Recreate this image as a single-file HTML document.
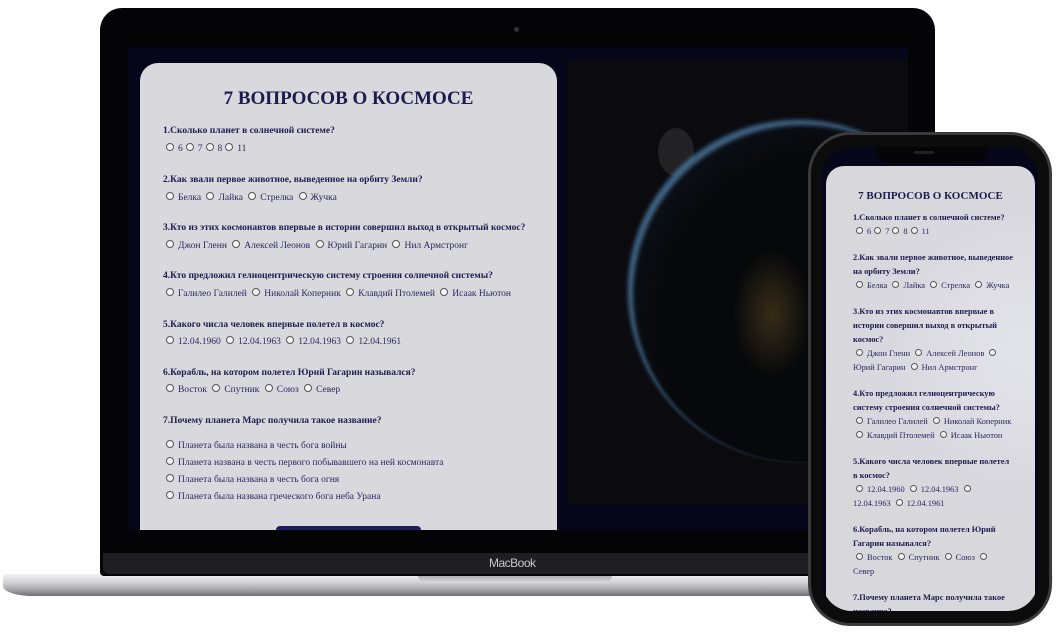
<!DOCTYPE html><html><head><meta charset="utf-8"><style>
*{margin:0;padding:0;box-sizing:border-box}
body{width:1056px;height:634px;background:#fff;position:relative;overflow:hidden;font-family:"Liberation Serif","DejaVu Serif",serif;color:#1d1b4e}
.a{position:absolute}
.q{position:absolute;font-weight:bold;font-size:9.5px;white-space:nowrap}
.o{position:absolute;font-size:9.5px;white-space:nowrap;color:#2a2860}
.r{display:inline-block;width:8px;height:8px;border:1px solid #555;border-radius:50%;background:#f4f4f6;margin:0 4px 0 3px;vertical-align:-0px}
.ph{position:absolute;width:180px;white-space:nowrap}
.pq{font-weight:bold;font-size:8.4px;line-height:14px}
.po{font-size:8.4px;line-height:14px;color:#2a2860;margin-bottom:12px}
.pr{display:inline-block;width:7px;height:7px;border:1px solid #555;border-radius:50%;background:#f4f4f6;margin:0 4px 0 3px}
</style></head><body>
<!-- laptop base -->
<div class="a" style="left:3px;top:574px;width:1050px;height:22px;background:linear-gradient(#f2f2f4 0,#d6d6da 35%,#a6a6ab 70%,#6e6e73 100%);border-radius:2px 2px 60px 30px/2px 2px 18px 10px"></div>
<div class="a" style="left:418px;top:575px;width:194px;height:8px;background:linear-gradient(#a9a9ae,#dcdce0);border-radius:0 0 8px 8px"></div>
<!-- laptop lid -->
<div class="a" style="left:100px;top:8px;width:835px;height:568px;background:#040306;border-radius:22px 22px 4px 4px"></div>
<div class="a" style="left:514px;top:27px;width:5px;height:5px;border-radius:50%;background:#333"></div>
<div class="a" style="left:103px;top:553px;width:830px;height:21px;background:#1f1f23;border-radius:0 0 6px 6px"></div>
<div class="a" style="left:489px;top:556px;font-family:'Liberation Sans',sans-serif;font-size:12px;color:#c8c8cc;letter-spacing:-0.5px">MacBook</div>
<div class="a" style="left:128px;top:47px;width:780px;height:483px;background:#06051a"></div>
<!-- space image -->
<div class="a" style="left:567px;top:59px;width:341px;height:446px;background:#0b0b0f;overflow:hidden">
<div class="a" style="left:91px;top:69px;width:36px;height:48px;border-radius:50%;background:#222225"></div>
<div class="a" style="left:63px;top:63px;width:340px;height:340px;border-radius:50%;background:radial-gradient(circle at 60% 60%,#07080b 60%,#0d1420 85%,#1d3550 96%);box-shadow:-2px -2px 4px rgba(100,170,230,.6),inset 3px 3px 4px rgba(110,170,220,.55)"></div>
<div class="a" style="left:165px;top:190px;width:80px;height:130px;background:radial-gradient(ellipse,rgba(200,150,60,.25),transparent 70%)"></div>
</div>
<!-- quiz card -->
<div class="a" style="left:140px;top:63px;width:417px;height:467px;background:#d9d8dd;border-radius:18px 18px 0 0"></div>
<div class="a" style="left:140px;top:88px;width:417px;text-align:center;font-weight:bold;font-size:19px">7 ВОПРОСОВ О КОСМОСЕ</div>
<div class="q" style="left:163px;top:126px">1.Сколько планет в солнечной системе?</div>
<div class="o" style="left:163px;top:143px"><span class="r"></span>6<span class="r"></span>7<span class="r"></span>8<span class="r"></span>11</div>
<div class="q" style="left:163px;top:175px">2.Как звали первое животное, выведенное на орбиту Земли?</div>
<div class="o" style="left:163px;top:192px"><span class="r"></span>Белка <span class="r"></span>Лайка <span class="r"></span>Стрелка <span class="r"></span>Жучка</div>
<div class="q" style="left:163px;top:223px">3.Кто из этих космонавтов впервые в истории совершил выход в открытый космос?</div>
<div class="o" style="left:163px;top:240px"><span class="r"></span>Джон Гленн <span class="r"></span>Алексей Леонов <span class="r"></span>Юрий Гагарин <span class="r"></span>Нил Армстронг</div>
<div class="q" style="left:163px;top:271px">4.Кто предложил гелиоцентрическую систему строения солнечной системы?</div>
<div class="o" style="left:163px;top:288px"><span class="r"></span>Галилео Галилей <span class="r"></span>Николай Коперник <span class="r"></span>Клавдий Птолемей <span class="r"></span>Исаак Ньютон</div>
<div class="q" style="left:163px;top:320px">5.Какого числа человек впервые полетел в космос?</div>
<div class="o" style="left:163px;top:336px"><span class="r"></span>12.04.1960 <span class="r"></span>12.04.1963 <span class="r"></span>12.04.1963 <span class="r"></span>12.04.1961</div>
<div class="q" style="left:163px;top:368px">6.Корабль, на котором полетел Юрий Гагарин назывался?</div>
<div class="o" style="left:163px;top:384px"><span class="r"></span>Восток <span class="r"></span>Спутник <span class="r"></span>Союз <span class="r"></span>Север</div>
<div class="q" style="left:163px;top:416px">7.Почему планета Марс получила такое название?</div>
<div class="o" style="left:163px;top:440px"><span class="r"></span>Планета была названа в честь бога войны</div>
<div class="o" style="left:163px;top:457px"><span class="r"></span>Планета названа в честь первого побывавшего на ней космонавта</div>
<div class="o" style="left:163px;top:474px"><span class="r"></span>Планета была названа в честь бога огня</div>
<div class="o" style="left:163px;top:491px"><span class="r"></span>Планета была названа греческого бога неба Урана</div>
<div class="a" style="left:276px;top:526px;width:145px;height:4px;background:#1e1c5a;border-radius:4px 4px 0 0"></div>
<!-- phone -->
<div class="a" style="left:808px;top:132px;width:244px;height:494px;background:#0c0c0c;border:3px solid #3a3a3c;border-radius:42px"></div>
<div class="a" style="left:822px;top:147px;width:216px;height:464px;background:#06051a;border-radius:30px;overflow:hidden">
<div class="a" style="left:4px;top:19px;width:209px;height:460px;background:radial-gradient(circle at 95% 40%,#e3e4ea 0,#d9d8de 40%,#d8d7dc 70%);border-radius:18px 18px 0 0"></div>
</div>
<div class="a" style="left:877px;top:147px;width:110px;height:16px;background:#050408;border-radius:0 0 12px 12px"></div>
<div class="a" style="left:914px;top:151px;width:20px;height:3px;background:#222;border-radius:2px"></div>
<div class="a" style="left:826px;top:190px;width:209px;text-align:center;font-weight:bold;font-size:11px">7 ВОПРОСОВ О КОСМОСЕ</div>
<div class="a" style="left:822px;top:147px;width:216px;height:464px;border-radius:30px;overflow:hidden">
<div class="ph" style="left:31px;top:64px">
<div class="pq">1.Сколько планет в солнечной системе?</div>
<div class="po"><span class="pr"></span>6<span class="pr"></span>7<span class="pr"></span>8<span class="pr"></span>11</div>
<div class="pq">2.Как звали первое животное, выведенное<br>на орбиту Земли?</div>
<div class="po"><span class="pr"></span>Белка <span class="pr"></span>Лайка <span class="pr"></span>Стрелка <span class="pr"></span>Жучка</div>
<div class="pq">3.Кто из этих космонавтов впервые в<br>истории совершил выход в открытый<br>космос?</div>
<div class="po"><span class="pr"></span>Джон Гленн <span class="pr"></span>Алексей Леонов <span class="pr"></span><br>Юрий Гагарин <span class="pr"></span>Нил Армстронг</div>
<div class="pq">4.Кто предложил гелиоцентрическую<br>систему строения солнечной системы?</div>
<div class="po"><span class="pr"></span>Галилео Галилей <span class="pr"></span>Николай Коперник<br><span class="pr"></span>Клавдий Птолемей <span class="pr"></span>Исаак Ньютон</div>
<div class="pq">5.Какого числа человек впервые полетел<br>в космос?</div>
<div class="po"><span class="pr"></span>12.04.1960 <span class="pr"></span>12.04.1963 <span class="pr"></span><br>12.04.1963 <span class="pr"></span>12.04.1961</div>
<div class="pq">6.Корабль, на котором полетел Юрий<br>Гагарин назывался?</div>
<div class="po"><span class="pr"></span>Восток <span class="pr"></span>Спутник <span class="pr"></span>Союз <span class="pr"></span><br>Север</div>
<div class="pq">7.Почему планета Марс получила такое<br>название?</div>
</div></div>
</body></html>
